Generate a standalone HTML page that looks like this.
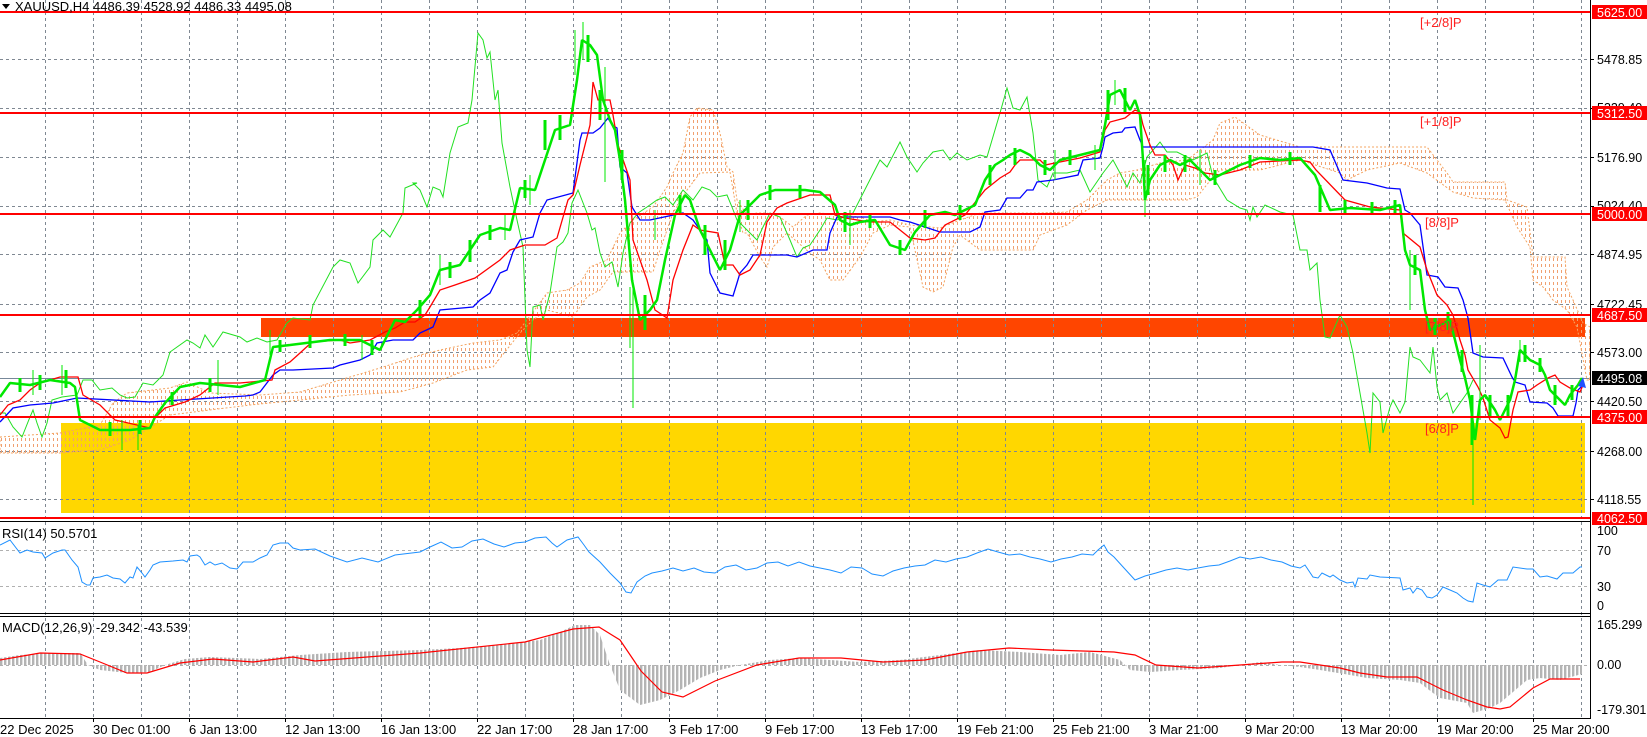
<!DOCTYPE html>
<html><head><meta charset="utf-8"><style>
html,body{margin:0;padding:0;background:#fff;overflow:hidden}
svg{display:block;font-family:"Liberation Sans",sans-serif}
</style></head><body>
<svg width="1647" height="737" viewBox="0 0 1647 737" xmlns="http://www.w3.org/2000/svg">
<defs>
<pattern id="cl" width="4" height="6" patternUnits="userSpaceOnUse"><rect x="1" y="0" width="1" height="3" fill="#f0a070"/></pattern>
<pattern id="hs" width="4" height="10" patternUnits="userSpaceOnUse"><rect x="0" y="0" width="2.4" height="10" fill="#b4b4b4"/></pattern>
</defs>
<rect width="1647" height="737" fill="#fff"/>
<rect x="61" y="423" width="1524" height="90" fill="#ffd700"/>
<rect x="261" y="318" width="1324" height="19" fill="#ff4500"/>
<g stroke="#7f8892" stroke-width="1" stroke-dasharray="3,3">
<path d="M45.5 0V718M93.5 0V718M141.5 0V718M189.5 0V718M237.5 0V718M285.5 0V718M333.5 0V718M381.5 0V718M429.5 0V718M477.5 0V718M525.5 0V718M573.5 0V718M621.5 0V718M669.5 0V718M717.5 0V718M765.5 0V718M813.5 0V718M861.5 0V718M909.5 0V718M957.5 0V718M1005.5 0V718M1053.5 0V718M1101.5 0V718M1149.5 0V718M1197.5 0V718M1245.5 0V718M1293.5 0V718M1341.5 0V718M1389.5 0V718M1437.5 0V718M1485.5 0V718M1533.5 0V718M1581.5 0V718"/>
<path d="M0 59.5H1590M0 108.5H1590M0 157.5H1590M0 206.5H1590M0 254.5H1590M0 304.5H1590M0 352.5H1590M0 401.5H1590M0 451.5H1590M0 499.5H1590"/>
</g>
<g stroke="#b0b0b0" stroke-dasharray="3,3"><path d="M0 550.5H1590M0 586.5H1590M0 665.5H1590"/></g>
<path d="M0 378.5H1590" stroke="#778899" stroke-width="1"/>
<path fill="url(#cl)" stroke="#f4a460" stroke-width="1" stroke-dasharray="2,2" d="M0,437 L60,433 100,425 113,403 127,393 170,388 187,382 210,393 260,395 300,392 340,380 380,368 420,355 440,350 473,343 500,340 517,333 527,320 547,293 567,290 580,283 590,267 607,260 620,233 633,220 653,207 667,187 673,173 683,153 690,117 697,108 713,110 720,133 727,167 733,172 737,200 747,215 757,213 767,213 780,217 793,227 807,215 820,213 860,217 873,222 890,220 910,225 940,228 960,220 980,213 1040,213 1067,212 1087,200 1107,180 1120,173 1137,170 1160,163 1187,160 1213,140 1220,123 1235,117 1260,135 1300,147 1427,147 1447,173 1453,182 1505,182 1507,200 1527,207 1533,257 1565,257 1567,287 1573,300 1583,323 1590,327 L1590,380 1587,380 1577,327 1567,310 1553,300 1543,287 1533,280 1530,247 1517,227 1505,200 1473,198 1453,192 1427,173 1400,163 1367,170 1347,180 1340,173 1300,160 1260,170 1220,170 1213,177 1197,197 1187,200 1107,200 1087,210 1067,225 1040,235 1033,250 980,250 960,235 953,247 943,287 933,292 923,287 910,227 890,225 873,233 860,257 843,280 830,280 820,260 810,253 787,233 773,247 767,267 760,257 747,233 743,233 737,213 730,172 700,173 687,190 673,213 660,250 653,272 613,272 600,290 587,297 573,317 547,310 533,320 520,333 493,367 467,370 433,383 400,392 350,395 300,400 250,405 170,415 130,440 100,450 60,453 0,453 Z"/>
<polyline fill="none" stroke="#22e022" stroke-width="1" points="0,413 5,413 13,427 22,437 30,417 33,410 37,423 42,437 47,423 52,400 62,397 77,395 83,380 92,380 100,390 112,388 120,395 127,398 135,397 143,383 153,385 163,375 170,352 187,340 193,343 200,348 205,335 213,347 223,332 240,337 247,342 257,338 267,342 277,340 287,323 293,318 310,320 313,305 333,267 340,260 350,263 358,283 370,267 373,240 383,230 390,237 403,213 405,188 417,183 413,183 420,190 427,207 433,187 440,190 443,197 450,153 458,127 468,123 472,100 478,33 483,40 487,58 490,52 495,100 498,90 502,143 510,187 517,220 523,247 527,350 530,367 533,307 540,305 543,320 550,293 557,247 563,242 568,233 572,203 578,190 587,213 592,230 595,228 600,253 605,267 612,262 618,287 623,253 630,223 638,213 647,207 657,200 665,197 673,205 683,190 693,200 702,187 710,190 717,197 727,195 732,207 737,220 747,230 757,240 763,227 770,213 780,217 790,240 797,257 803,248 810,245 820,230 827,218 837,220 853,213 880,160 887,167 900,142 907,157 917,172 923,163 933,152 943,150 950,160 957,153 967,160 980,155 987,157 1000,113 1007,88 1013,108 1020,110 1027,97 1033,133 1038,180 1047,187 1053,173 1067,173 1080,170 1090,192 1103,173 1113,160 1120,173 1127,187 1133,173 1140,183 1147,157 1160,142 1167,152 1177,152 1193,160 1207,153 1213,177 1227,200 1240,208 1247,210 1250,220 1253,207 1257,217 1265,205 1280,212 1293,215 1300,250 1307,250 1310,270 1317,263 1320,300 1325,337 1330,338 1340,315 1347,327 1353,353 1360,393 1367,433 1370,453 1373,393 1380,402 1383,433 1390,407 1393,400 1400,413 1405,402 1410,347 1413,357 1420,360 1430,373 1433,347 1437,387 1440,400 1447,393 1453,413 1460,403 1467,393 1473,380"/>
<polyline fill="none" stroke="#0000ff" stroke-width="1.3" points="0,422 13,408 30,405 53,403 77,398 150,402 180,400 245,396 253,395 260,392 273,375 280,370 293,370 333,368 340,365 360,360 370,355 377,343 393,340 413,340 420,333 433,327 440,310 473,307 480,300 490,293 500,273 507,270 513,252 520,240 533,237 540,213 547,200 573,193 580,140 582,133 593,133 600,128 608,118 612,125 617,128 620,167 627,173 632,207 640,220 650,220 683,213 693,220 700,230 707,240 710,273 720,293 733,296 737,283 740,273 747,265 753,255 787,255 797,257 813,250 827,250 830,233 837,217 890,217 900,220 910,222 913,223 940,232 970,232 980,227 985,212 1000,210 1007,198 1020,198 1027,190 1033,190 1037,182 1053,180 1078,175 1083,160 1100,158 1103,147 1105,137 1113,133 1122,132 1125,128 1135,127 1140,140 1143,147 1300,147 1313,147 1330,150 1343,180 1367,183 1387,188 1400,189 1405,210 1410,213 1420,225 1427,275 1438,277 1445,287 1458,288 1463,300 1468,318 1473,353 1483,357 1503,358 1512,377 1515,382 1525,385 1530,402 1547,403 1553,408 1558,416 1573,416 1576,403 1578,390 1582,386"/>
<polyline fill="none" stroke="#ff0000" stroke-width="1.3" points="0,415 8,405 20,400 30,390 40,383 60,377 78,377 83,395 100,405 115,420 150,428 155,418 165,408 185,402 200,395 215,383 240,383 272,380 275,370 290,362 300,353 312,342 340,340 350,343 370,340 385,332 395,328 405,322 415,322 425,315 430,307 440,290 455,285 475,278 500,260 510,250 525,245 545,245 557,238 568,200 573,195 580,165 590,125 593,82 598,100 610,100 613,115 618,145 630,180 633,240 647,280 655,310 667,318 673,280 683,250 693,225 700,230 718,233 725,265 733,265 740,275 750,270 760,255 767,222 777,208 787,203 810,195 830,195 835,215 845,218 870,222 890,222 900,230 910,238 925,240 935,238 945,225 965,215 985,190 1000,178 1010,172 1015,165 1020,160 1040,160 1045,165 1060,162 1080,158 1100,152 1105,130 1110,122 1125,118 1135,110 1140,112 1143,125 1150,145 1155,155 1165,155 1173,165 1178,180 1185,165 1195,168 1205,173 1220,175 1240,170 1260,162 1300,160 1310,162 1316,170 1345,200 1370,207 1400,210 1403,233 1420,247 1427,270 1437,295 1447,305 1453,315 1460,340 1465,355 1468,370 1478,387 1483,398 1490,420 1500,428 1505,438 1508,437 1513,410 1518,392 1530,390 1537,385 1548,378 1555,375 1560,382 1570,388 1580,392 1583,385"/>
<g stroke="#00e800" fill="none">
<polyline stroke-width="2.5" stroke-linejoin="bevel" points="0,397 10,383 30,385 50,380 70,383 75,387 80,420 100,430 130,430 150,428 155,417 165,403 180,387 200,383 240,387 265,380 273,347 290,345 330,340 360,340 380,350 395,320 405,322 417,310 430,295 440,270 460,265 480,235 500,228 510,230 520,188 535,190 555,130 570,125 577,80 582,40 590,45 597,55 603,100 610,120 615,130 620,160 625,200 632,280 640,320 650,310 657,300 665,260 675,215 685,195 690,200 700,230 710,250 720,270 730,250 740,215 750,205 760,195 775,190 790,190 805,190 820,192 835,205 840,220 850,225 860,222 875,220 890,245 905,250 915,232 930,215 945,212 955,215 965,210 975,205 985,180 995,165 1003,160 1010,155 1020,150 1030,155 1040,165 1050,170 1060,160 1080,155 1100,150 1105,125 1110,95 1120,90 1130,110 1135,100 1140,115 1143,160 1145,200 1150,180 1160,165 1170,160 1180,165 1190,160 1200,170 1210,180 1220,175 1240,165 1260,158 1280,160 1300,158 1315,175 1330,210 1350,208 1380,210 1400,205 1405,250 1410,265 1420,270 1425,310 1430,330 1440,325 1450,320 1455,340 1460,360 1465,378 1470,400 1475,440 1480,400 1485,395 1495,410 1500,420 1505,410 1510,400 1515,380 1520,350 1530,360 1540,365 1545,375 1550,390 1560,400 1565,405 1570,395 1578,385 1582,378"/>
<path stroke-width="3" d="M20 378V392M40 375V390M66 370V388M110 422V436M140 420V434M172 392V405M210 378V392M280 340V352M310 335V348M345 334V346M372 340V355M420 300V318M450 262V278M470 240V262M490 225V240M525 180V198M545 120V150M560 115V140M588 35V62M600 90V120M622 150V180M645 295V330M680 195V215M705 225V255M725 240V270M748 200V220M770 185V200M800 185V198M845 212V232M870 215V228M900 240V255M925 210V228M960 205V220M990 165V185M1015 148V165M1045 160V175M1070 150V165M1108 90V120M1125 88V112M1148 165V195M1165 155V172M1185 155V172M1215 170V185M1250 155V168M1290 152V165M1320 185V212M1345 200V215M1372 202V215M1395 200V213M1415 255V275M1435 318V335M1448 312V330M1462 350V372M1472 395V445M1490 395V418M1508 395V418M1525 345V362M1540 358V372M1555 385V405M1572 385V400"/>
<path stroke-width="1" d="M633 280V408M583 22V60M575 30V75M605 67V182M630 287V348M1473 400V505M1145 160V217M1410 250V310M1480 345V420M1520 340V362M33 370V395M62 365V395M122 420V450M138 425V450M362 335V360M218 360V395M270 330V355M440 255V285M505 215V240M530 175V205M655 210V240M740 200V232M850 210V245M1055 150V180M1115 80V105M1200 150V185M1095 145V170"/>
</g>
<path d="M1578 386L1583 377 1586 388Z" fill="#2050ff"/>
<g stroke="#ff0000" stroke-width="2">
<path d="M0 12H1590M0 113H1590M0 214H1590M0 315H1590M0 417H1590M0 518H1590"/>
</g>
<g fill="#ff2020" font-size="13">
<text x="1420" y="27">[+2/8]P</text>
<text x="1420" y="126">[+1/8]P</text>
<text x="1425" y="227">[8/8]P</text>
<text x="1425" y="331">[7/8]P</text>
<text x="1425" y="433">[6/8]P</text>
</g>
<path d="M0 521.5H1590M0 613.5H1590M0 616.5H1590M0 718.5H1590M1590.5 0V719" stroke="#000" stroke-width="1"/>
<polyline fill="none" stroke="#1e90ff" stroke-width="1" points="0,545 10,540 20,553 27,550 33,552 42,553 45,558 53,553 62,550 65,550 72,560 78,567 82,582 87,585 90,585 93,578 100,577 107,575 113,578 120,579 125,583 130,577 133,578 137,567 142,573 145,577 150,570 153,565 160,562 173,561 183,560 187,562 190,556 197,555 200,557 205,565 210,562 215,565 222,563 230,568 237,569 243,562 253,562 260,558 267,555 273,545 280,543 288,543 293,548 300,550 315,549 330,556 347,562 362,558 378,562 395,555 420,552 430,547 441,542 452,548 462,547 472,541 483,539 494,544 504,547 515,543 525,542 535,538 546,537 552,543 557,547 567,540 578,537 584,545 589,552 600,562 610,573 620,583 626,592 631,593 637,582 645,576 652,573 662,571 673,568 683,571 694,568 704,572 715,573 725,567 736,565 746,570 757,568 767,563 778,562 788,566 799,562 810,566 820,568 830,570 841,573 851,567 862,568 872,574 883,576 893,571 904,568 915,566 925,565 935,560 946,562 956,559 967,557 977,553 988,549 998,552 1009,555 1020,554 1030,557 1040,559 1051,562 1061,559 1072,557 1082,554 1093,555 1098,550 1104,545 1108,552 1114,557 1124,568 1135,580 1145,576 1156,573 1166,570 1177,568 1188,570 1198,568 1209,566 1219,565 1230,561 1240,557 1250,559 1261,557 1271,560 1282,562 1291,566 1300,568 1305,565 1313,577 1318,578 1322,573 1330,577 1333,575 1340,580 1347,583 1353,582 1355,587 1358,578 1367,579 1370,575 1380,577 1400,578 1403,590 1410,588 1413,593 1417,588 1422,590 1427,597 1432,598 1437,595 1443,587 1450,590 1457,593 1463,598 1468,601 1473,602 1477,583 1483,585 1490,587 1498,580 1507,580 1513,567 1527,569 1533,569 1540,577 1547,576 1557,579 1563,573 1573,573 1580,567 1582,567"/>
<path fill="url(#hs)" d="M0,658 L20,655 50,653 80,653 88,665 100,670 127,673 150,672 165,665 185,659 210,657 260,659 300,655 347,652 420,650 460,648 500,645 540,640 560,632 575,625 590,625 600,635 610,665 620,690 640,705 660,700 680,690 700,678 720,670 740,665 770,660 800,658 830,660 860,662 900,660 940,655 980,650 1020,652 1060,655 1090,652 1120,660 1130,670 1150,672 1180,670 1220,668 1260,662 1280,665 1300,667 1320,670 1350,675 1367,678 1400,680 1420,683 1433,693 1440,698 1467,703 1473,713 1490,708 1500,703 1513,692 1527,680 1540,678 1560,680 1582,674 1582,665 0,665Z"/>
<polyline fill="none" stroke="#ff0000" stroke-width="1.2" points="0,660 40,653 80,654 100,662 127,673 147,673 180,663 213,659 253,662 293,657 315,661 420,653 525,642 573,629 599,627 620,640 641,671 662,692 683,697 715,681 757,665 799,658 841,658 883,662 925,660 967,652 1009,648 1051,650 1114,652 1135,655 1156,665 1198,668 1240,665 1282,662 1300,662 1320,665 1340,668 1360,673 1387,677 1417,677 1427,682 1443,690 1467,700 1487,707 1500,709 1510,707 1533,688 1550,679 1580,679"/>
<path d="M2 4L10 4 6 9Z" fill="#000"/>
<text x="15" y="11" font-size="13" fill="#000">XAUUSD,H4  4486.39 4528.92 4486.33 4495.08</text>
<text x="2" y="538" font-size="13" fill="#000">RSI(14) 50.5701</text>
<text x="2" y="632" font-size="13" fill="#000">MACD(12,26,9) -29.342 -43.539</text>
<path stroke="#000" d="M1590 59.5h4M1590 108.5h4M1590 157.5h4M1590 206.5h4M1590 254.5h4M1590 304.5h4M1590 352.5h4M1590 401.5h4M1590 451.5h4M1590 499.5h4M93.5 718v4M189.5 718v4M285.5 718v4M381.5 718v4M477.5 718v4M573.5 718v4M669.5 718v4M765.5 718v4M861.5 718v4M957.5 718v4M1053.5 718v4M1149.5 718v4M1245.5 718v4M1341.5 718v4M1437.5 718v4M1533.5 718v4"/>
<g font-size="12.5" fill="#000">
<text x="1597" y="64">5478.85</text>
<text x="1597" y="112">5329.40</text>
<text x="1597" y="162">5176.90</text>
<text x="1597" y="210">5024.40</text>
<text x="1597" y="259">4874.95</text>
<text x="1597" y="309">4722.45</text>
<text x="1597" y="357">4573.00</text>
<text x="1597" y="406">4420.50</text>
<text x="1597" y="456">4268.00</text>
<text x="1597" y="504">4118.55</text>
<text x="1597" y="535">100</text>
<text x="1597" y="555">70</text>
<text x="1597" y="591">30</text>
<text x="1597" y="610">0</text>
<text x="1597" y="629">165.299</text>
<text x="1597" y="669">0.00</text>
<text x="1597" y="714">-179.301</text>
</g>
<g fill="#ff0000">
<rect x="1592" y="5" width="55" height="14"/>
<rect x="1592" y="106" width="55" height="14"/>
<rect x="1592" y="207" width="55" height="14"/>
<rect x="1592" y="308" width="55" height="14"/>
<rect x="1592" y="410" width="55" height="14"/>
<rect x="1592" y="512" width="55" height="13"/>
</g>
<rect x="1592" y="371" width="55" height="14" fill="#000"/>
<g font-size="12.5" fill="#fff">
<text x="1597" y="17">5625.00</text>
<text x="1597" y="118">5312.50</text>
<text x="1597" y="219">5000.00</text>
<text x="1597" y="320">4687.50</text>
<text x="1597" y="383">4495.08</text>
<text x="1597" y="422">4375.00</text>
<text x="1597" y="523">4062.50</text>
</g>
<g font-size="13" fill="#000">
<text x="0" y="734">22 Dec 2025</text>
<text x="93" y="734">30 Dec 01:00</text>
<text x="189" y="734">6 Jan 13:00</text>
<text x="285" y="734">12 Jan 13:00</text>
<text x="381" y="734">16 Jan 13:00</text>
<text x="477" y="734">22 Jan 17:00</text>
<text x="573" y="734">28 Jan 17:00</text>
<text x="669" y="734">3 Feb 17:00</text>
<text x="765" y="734">9 Feb 17:00</text>
<text x="861" y="734">13 Feb 17:00</text>
<text x="957" y="734">19 Feb 21:00</text>
<text x="1053" y="734">25 Feb 21:00</text>
<text x="1149" y="734">3 Mar 21:00</text>
<text x="1245" y="734">9 Mar 20:00</text>
<text x="1341" y="734">13 Mar 20:00</text>
<text x="1437" y="734">19 Mar 20:00</text>
<text x="1533" y="734">25 Mar 20:00</text>
</g>
</svg>
</body></html>
